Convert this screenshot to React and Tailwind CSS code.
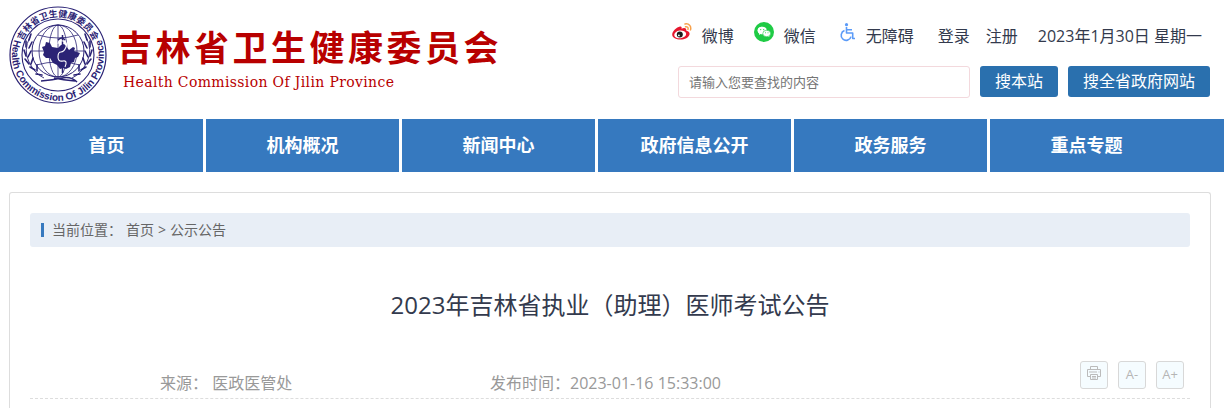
import React, { useState } from 'react';

const navItems = ['首页', '机构概况', '新闻中心', '政府信息公开', '政务服务', '重点专题'];

// Round emblem with text running along the ring
const Emblem = () => (
  <svg viewBox="0 0 98 98" className="w-[98px] h-[98px] shrink-0" role="img" aria-label="吉林省卫生健康委员会">
    <defs>
      <path id="ringTop" d="M 12.1 57 A 37.8 37.8 0 1 1 85.9 57" />
      <path id="ringBottom" d="M 6.6 31 A 46 46 0 1 0 91.4 31" />
    </defs>
    <g fill="none" stroke="#2b2375">
      <circle cx="49" cy="49" r="48" strokeWidth="1.2" />
      <circle cx="49" cy="49" r="36" strokeWidth="1.1" />
      <circle cx="49" cy="45" r="26" strokeWidth="1" />
      <ellipse cx="49" cy="45" rx="9" ry="26" strokeWidth="0.8" />
      <ellipse cx="49" cy="45" rx="19" ry="26" strokeWidth="0.8" />
      <path d="M49 19v52M23 45h52M29 29q20 6 40 0M27 59q22 -6 44 0" strokeWidth="0.8" />
      {/* Laurel branches */}
      <path d="M21 31q-7 13-1 25t15 16M77 31q7 13 1 25t-15 16" strokeWidth="0.9" />
      <path
        d="M22 28l-2 6M17 35l0 6M23 36l-3 6M15 44l2 6M22 45l-3 6M16 53l4 5M24 52l-2 6M21 61l5 3M28 59l0 6M27 68l6 1M76 28l2 6M81 35l0 6M75 36l3 6M83 44l-2 6M76 45l3 6M82 53l-4 5M74 52l2 6M77 61l-5 3M70 59l0 6M71 68l-6 1"
        strokeWidth="1.6"
        strokeLinecap="round"
      />
      <path d="M32 75q12-1 21-3t15 4M66 75q-12-1-21-3" strokeWidth="1.6" />
    </g>
    <path
      fill="#2b2375"
      d="M33 41l3-1 1-4 4 1 2 4 6 1 3-3 3-1 2 2 3 4 4-3 2 1-1 3 6 2-2 4-3 1-1 4-3 1-1 4-4 2-3-1-3 1-3-4-4-2-3-5-4 0-3-3 1-3z"
    />
    <path d="M53.500 29v38" stroke="#2b2375" strokeWidth="1.5" />
    <path d="M49 38q0-4 5-3t3 6-5 5-3 5 5 4 2 6" fill="none" stroke="#fff" strokeWidth="1.1" />
    <path d="M49 34q4-4 7 0" fill="none" stroke="#2b2375" strokeWidth="1.3" />
    <g fill="#2b2375">
      <text className="text-[9px] font-bold font-['Noto_Sans_CJK_SC',sans-serif]">
        <textPath href="#ringTop" startOffset="50%" textAnchor="middle">吉林省卫生健康委员会</textPath>
      </text>
      <text className="text-[10px] font-bold font-['Liberation_Sans',sans-serif]">
        <textPath href="#ringBottom" startOffset="50%" textAnchor="middle">Health Commission Of Jilin Province</textPath>
      </text>
    </g>
  </svg>
);

const WeiboIcon = () => (
  <svg viewBox="0 0 20 20" className="w-5 h-5" aria-hidden="true">
    <path
      fill="#e6162d"
      d="M8 4.600c1.300-.3 2 .6 1.500 2.100 2.300-1 5.200-1 4.700 1.700 2.500.7 3.800 2 3.300 4.200-.7 3-4.700 5-9 5S.2 15.800.2 12.600C.2 9.200 4.600 5.200 8 4.600z"
    />
    <ellipse cx="8.200" cy="12.400" rx="6" ry="3.900" fill="#fff" transform="rotate(-7 8.200 12.400)" />
    <circle cx="7.800" cy="12.500" r="3" fill="#1b1b1b" />
    <circle cx="6.900" cy="13.400" r="0.9" fill="#fff" />
    <path d="M13 2c3.800-.8 6.600 2 5.500 5.900M13.500 4.800c1.800-.3 3 .9 2.500 2.600" fill="none" stroke="#f7a14b" strokeWidth="1.5" strokeLinecap="round" />
  </svg>
);

const WechatIcon = () => (
  <svg viewBox="0 0 20 20" className="w-5 h-5" aria-hidden="true">
    <circle cx="10" cy="10" r="10" fill="#1fcb45" />
    <path d="M8.200 4.800c-2.600 0-4.600 1.600-4.600 3.700 0 1.200.7 2.200 1.700 2.900l-.4 1.500 1.700-.9 1.600.2z" fill="#fff" />
    <ellipse cx="8.200" cy="8.500" rx="4.500" ry="3.700" fill="#fff" />
    <path d="M14.500 13.500l1.200 1.500-2.300-.7z" fill="#fff" />
    <ellipse cx="12.700" cy="11.500" rx="3.900" ry="3.200" fill="#fff" stroke="#1fcb45" strokeWidth="0.6" />
    <g fill="#1fcb45">
      <circle cx="6.700" cy="7.600" r="0.6" />
      <circle cx="9.700" cy="7.600" r="0.6" />
      <circle cx="11.500" cy="10.800" r="0.5" />
      <circle cx="14" cy="10.800" r="0.5" />
    </g>
  </svg>
);

const AccessIcon = () => (
  <svg viewBox="0 0 20 20" className="w-5 h-5" fill="none" stroke="#5b9bf8" strokeWidth="1.6" aria-hidden="true">
    <circle cx="10.500" cy="2.700" r="1.600" fill="#5b9bf8" stroke="none" />
    <path d="M10.500 5v6h6.200v5.500H19M10.500 7.800h5.500" strokeLinejoin="round" />
    <path d="M8.500 8.600a5 5 0 1 0 6.500 6" />
  </svg>
);

const PrinterIcon = () => (
  <svg viewBox="0 0 14 14" className="w-3.5 h-3.5 mb-1" fill="none" stroke="#bbb" aria-hidden="true">
    <path d="M3.500 3.500v-3h7v3M3 10.500H.5v-7h13v7H11M3.500 8.500h7v5h-7zM2 6h8M11.500 6h1M5 10.500h4M5 12h4" />
  </svg>
);

const App = () => {
  const [keyword, setKeyword] = useState('');

  const toolClass =
    'w-7 h-7 flex items-center justify-center rounded-[3px] border border-[#d8d8d8] bg-[#f5fcff] text-[#b5b5b5] text-[13px] font-medium';
  const searchClass = 'h-[31px] px-[15px] rounded-[3px] bg-[#2a70ae] text-white text-base leading-[31px]';

  return (
    <div className="min-h-screen flex flex-col bg-white text-[#333a4d] font-['Open_Sans','Noto_Sans_CJK_SC',sans-serif]">
      {/* Header */}
      <header className="flex justify-between pt-1.5 pl-[9px] pr-3.5 h-[119px]">
        <a href="#" className="flex items-start gap-2.5 text-[#b80000]">
          <Emblem />
          <span className="flex flex-col pt-[18px]">
            <span className="text-[35px] leading-[44px] font-bold tracking-widest font-['Noto_Sans_CJK_SC',sans-serif]">
              吉林省卫生健康委员会
            </span>
            <span className="pl-1.5 pt-1 text-sm leading-5 tracking-wide font-['DejaVu_Serif',serif]">
              Health Commission Of Jilin Province
            </span>
          </span>
        </a>

        <div className="flex flex-col items-end">
          <div className="flex h-[60px] pt-4 pr-2 text-base leading-7">
            <a href="#" className="flex gap-2.5 mr-5"><WeiboIcon />微博</a>
            <a href="#" className="flex gap-2.5 mr-5"><WechatIcon />微信</a>
            <a href="#" className="flex gap-2.5 mr-6"><AccessIcon />无障碍</a>
            <a href="#" className="mr-4">登录</a>
            <a href="#" className="mr-5">注册</a>
            <span>2023年1月30日 星期一</span>
          </div>
          <form className="flex gap-2.5" onSubmit={(e) => e.preventDefault()}>
            <input
              type="text"
              aria-label="请输入您要查找的内容"
              placeholder="请输入您要查找的内容"
              value={keyword}
              onChange={(e) => setKeyword(e.target.value)}
              className="w-[292px] h-8 px-2.5 rounded-[3px] border border-[#f3d9dd] text-[13px] placeholder:text-[#757575]"
            />
            <button type="submit" className={searchClass}>搜本站</button>
            <button type="button" className={searchClass}>搜全省政府网站</button>
          </form>
        </div>
      </header>

      {/* Main navigation */}
      <nav className="bg-[#3679bf] pr-[38px]">
        <ul className="grid grid-cols-6 pl-2.5">
          {navItems.map((item) => (
            <li key={item} className="border-r-[3px] border-white last:border-transparent">
              <a href="#" className="block text-center text-white text-lg leading-[53px] font-bold">{item}</a>
            </li>
          ))}
        </ul>
      </nav>

      {/* Article */}
      <main className="flex-1 mt-5 ml-[9px] mr-[13px] px-5 pt-5 border border-b-0 border-[#ddd] rounded-t-[3px]">
        <div className="flex items-center h-[34px] pl-[11px] rounded-[3px] bg-[#e8eef6] text-sm text-[#666]">
          <span className="w-[3px] h-3.5 mr-2 bg-[#3679bf]" />
          <span className="mr-1">当前位置：</span>
          <a href="#">首页</a>
          <span className="mx-1">&gt;</span>
          <a href="#">公示公告</a>
        </div>

        <h1 className="mt-10 text-2xl leading-9 text-center">2023年吉林省执业（助理）医师考试公告</h1>

        <div className="flex mt-[38px] h-[38px] pr-1.5 border-b border-dashed border-[#ddd] text-base text-[#999]">
          <span className="w-[460px] pl-[130px] pt-2 leading-7">来源： 医政医管处</span>
          <span className="flex-1 pt-2 leading-7">发布时间：2023-01-16 15:33:00</span>
          <span className="flex gap-2.5">
            <button type="button" aria-label="打印" className={toolClass}><PrinterIcon /></button>
            <button type="button" className={toolClass}>A-</button>
            <button type="button" className={toolClass}>A+</button>
          </span>
        </div>
      </main>
    </div>
  );
};

export default App;
